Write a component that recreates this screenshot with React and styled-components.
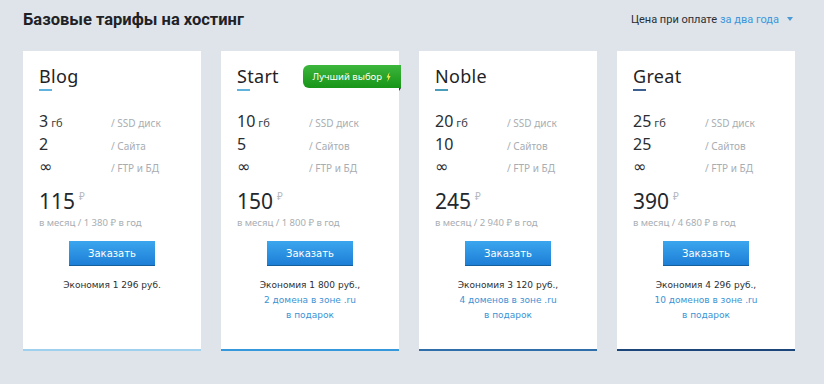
import React from 'react';
import styled, { createGlobalStyle } from 'styled-components';

const GlobalStyle = createGlobalStyle`
  body {
    margin: 0;
    background: #dee4ea;
    font-family: "Noto Sans", "Open Sans", sans-serif;
  }
`;

const plans = [
  { name: 'Blog', disk: '3', sites: '2', sitesLabel: 'Сайта', price: '115', year: '1 380', save: '1 296 руб.', gift: null, accent: '#9fd0ee', mark: '#5fb3dc' },
  { name: 'Start', disk: '10', sites: '5', sitesLabel: 'Сайтов', price: '150', year: '1 800', save: '1 800 руб.,', gift: '2 домена в зоне .ru', accent: '#3598dc', mark: '#5fb3dc', best: true },
  { name: 'Noble', disk: '20', sites: '10', sitesLabel: 'Сайтов', price: '245', year: '2 940', save: '3 120 руб.,', gift: '4 доменов в зоне .ru', accent: '#2f6ea8', mark: '#4a9cb8' },
  { name: 'Great', disk: '25', sites: '25', sitesLabel: 'Сайтов', price: '390', year: '4 680', save: '4 296 руб.,', gift: '10 доменов в зоне .ru', accent: '#1c4679', mark: '#3d5f92' },
];

const Page = styled.div`
  width: 824px;
  height: 384px;
  padding: 0 23px;
  box-sizing: border-box;
`;

const Header = styled.div`
  display: flex;
  align-items: center;
  justify-content: space-between;
  height: 38px;
  margin-bottom: 13px;
`;

const Title = styled.h1`
  margin: 0;
  font-family: Roboto, "Noto Sans", sans-serif;
  font-size: 16.5px;
  font-weight: 700;
  color: #1e2226;
`;

const Period = styled.div`
  display: flex;
  align-items: center;
  gap: 3px;
  font-family: Roboto, "Noto Sans", sans-serif;
  font-size: 11px;
  color: #2a2e33;
  margin-right: 8px;
`;

const PeriodLink = styled.span`
  color: #3d97dc;
`;

const Caret = styled.span`
  width: 0;
  height: 0;
  margin-left: 5px;
  border-left: 3.5px solid transparent;
  border-right: 3.5px solid transparent;
  border-top: 4px solid #4a9ad8;
`;

const Cards = styled.div`
  display: grid;
  grid-template-columns: repeat(4, 178px);
  gap: 20px;
`;

const Card = styled.div`
  position: relative;
  height: 300px;
  background: #fff;
  border-bottom: 2px solid ${p => p.$accent};
  padding: 14px 16px 0;
  box-sizing: border-box;
  display: flex;
  flex-direction: column;
`;

const Name = styled.div`
  font-size: 18px;
  line-height: 22px;
  color: #1f2326;
  letter-spacing: 0.3px;
`;

const Mark = styled.div`
  width: 13px;
  height: 2px;
  margin-top: 2px;
  background: ${p => p.$color};
`;

const Features = styled.div`
  margin-top: 20px;
  display: flex;
  flex-direction: column;
`;

const Row = styled.div`
  display: grid;
  grid-template-columns: 72px 1fr;
  align-items: baseline;
  height: 23px;
  line-height: 20px;
`;

const Value = styled.span`
  font-size: 16px;
  color: #2a2d31;
`;

const Infinity = styled.span`
  font-family: "DejaVu Sans", sans-serif;
  font-size: 16px;
  color: #2a2d31;
`;

const Unit = styled.span`
  font-size: 11px;
  margin-left: 3px;
  color: #3a3d41;
`;

const Label = styled.span`
  font-size: 10px;
  color: #a8adb2;
`;

const Price = styled.div`
  margin-top: 3px;
  font-size: 21px;
  line-height: 26px;
  color: #24282c;
`;

const Rub = styled.sup`
  font-size: 10px;
  color: #b4b8bc;
  margin-left: 4px;
  vertical-align: 9px;
`;

const PerMonth = styled.div`
  font-size: 9.5px;
  color: #a8adb2;
  margin-top: 2px;
`;

const Button = styled.button`
  align-self: center;
  margin-top: 12px;
  width: 86px;
  height: 25px;
  border: 0;
  padding: 0;
  background: linear-gradient(#3ba6ee, #1d7ed6);
  border-bottom: 1px solid #155f9e;
  color: #fff;
  font-family: "DejaVu Sans", Verdana, sans-serif;
  font-size: 10px;
`;

const Note = styled.div`
  margin-top: 12px;
  text-align: center;
  font-family: "DejaVu Sans", Verdana, sans-serif;
  font-size: 9px;
  line-height: 15px;
  color: #2c2f33;
`;

const Gift = styled.div`
  color: #3c92d4;
`;

const Badge = styled.div`
  position: absolute;
  top: 14px;
  right: -2px;
  height: 23px;
  padding: 0 10px 0 10px;
  display: flex;
  align-items: center;
  gap: 4px;
  background: linear-gradient(#3cb63c, #189418);
  border-radius: 6px 0 0 6px;
  color: #fff;
  font-size: 9.5px;
  &::after {
    content: '';
    position: absolute;
    right: 0;
    bottom: -3px;
    border-top: 3px solid #2b3a2b;
    border-right: 2px solid transparent;
  }
`;

const Bolt = () => (
  <svg width="5" height="10" viewBox="0 0 5 10">
    <path d="M3.5 0 L0.5 5.5 H2.3 L1.3 10 L4.6 4 H2.8 Z" fill="#f4e84a" />
  </svg>
);

export default function App() {
  return (
    <Page>
      <GlobalStyle />
      <Header>
        <Title>Базовые тарифы на хостинг</Title>
        <Period>
          Цена при оплате <PeriodLink>за два года</PeriodLink>
          <Caret />
        </Period>
      </Header>
      <Cards>
        {plans.map(p => (
          <Card key={p.name} $accent={p.accent}>
            {p.best && (
              <Badge>
                Лучший выбор <Bolt />
              </Badge>
            )}
            <Name>{p.name}</Name>
            <Mark $color={p.mark} />
            <Features>
              <Row>
                <Value>{p.disk}<Unit>гб</Unit></Value>
                <Label>/ SSD диск</Label>
              </Row>
              <Row>
                <Value>{p.sites}</Value>
                <Label>/ {p.sitesLabel}</Label>
              </Row>
              <Row>
                <Infinity>∞</Infinity>
                <Label>/ FTP и БД</Label>
              </Row>
            </Features>
            <Price>
              {p.price}<Rub>₽</Rub>
            </Price>
            <PerMonth>в месяц / {p.year} ₽ в год</PerMonth>
            <Button>Заказать</Button>
            <Note>
              Экономия {p.save}
              {p.gift && (
                <Gift>
                  {p.gift}
                  <br />
                  в подарок
                </Gift>
              )}
            </Note>
          </Card>
        ))}
      </Cards>
    </Page>
  );
}
